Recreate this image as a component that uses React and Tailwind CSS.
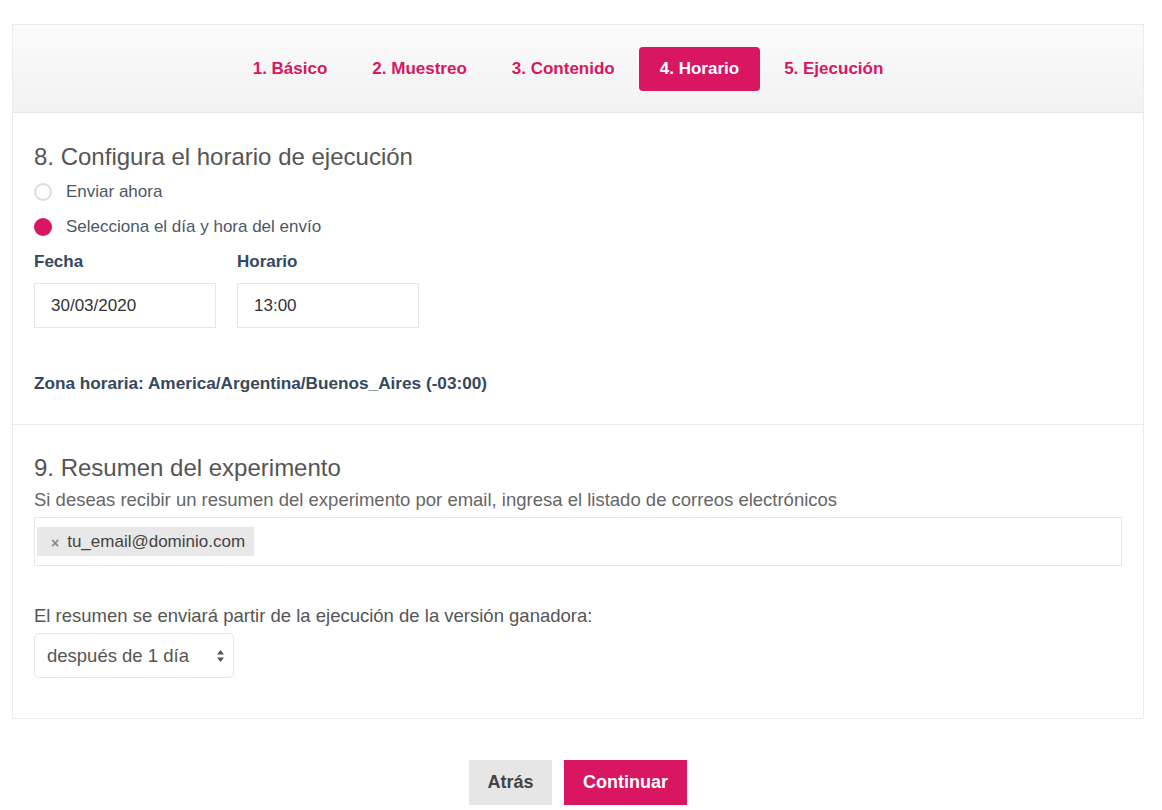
import React, { useState } from 'react'

const tabs = ['1. Básico', '2. Muestreo', '3. Contenido', '4. Horario', '5. Ejecución']

function Radio({ checked, label }) {
  return (
    <label className="flex items-center h-[35px]">
      {checked ? (
        <span className="w-[18px] h-[18px] rounded-full bg-[#d81661]"></span>
      ) : (
        <span className="w-[18px] h-[18px] rounded-full border-2 border-[#dcdcdc] bg-white"></span>
      )}
      <span className="ml-[14px] text-[17px] text-[#4b5866]">{label}</span>
    </label>
  )
}

export default function App() {
  const [active] = useState(3)

  return (
    <div className="bg-white min-h-[810px] pt-6 px-3 font-['Liberation_Sans',Arial,sans-serif]">
      <div className="w-[1132px] border border-[#ececec]">
        {/* steps */}
        <div className="h-[88px] bg-gradient-to-b from-[#fbfbfb] to-[#f2f2f2] border-b border-[#e6e6e6] flex items-center justify-center pr-5">
          {tabs.map((t, i) => (
            <div
              key={t}
              className={
                i === active
                  ? 'mx-[1.5px] px-[21px] h-11 flex items-center rounded-[4px] bg-[#d81661] text-white text-[17px] font-bold'
                  : 'mx-[1.5px] px-[21px] h-11 flex items-center text-[#d81661] text-[17px] font-bold'
              }
            >
              {t}
            </div>
          ))}
        </div>

        {/* section 8 */}
        <div className="px-[21px] pt-[30px] pb-[30px] border-b border-[#ececec]">
          <h2 className="text-[24px] leading-[28px] text-[#555]">8. Configura el horario de ejecución</h2>
          <div className="mt-[3px]">
            <Radio label="Enviar ahora" />
            <Radio checked label="Selecciona el día y hora del envío" />
          </div>
          <div className="flex gap-[21px] mt-[7px]">
            <div>
              <div className="text-[17px] leading-[22px] font-bold text-[#34495e]">Fecha</div>
              <div className="mt-[10px] w-[182px] h-[45px] border border-[#e6e6e6] flex items-center px-4 text-[17px] text-[#333]">30/03/2020</div>
            </div>
            <div>
              <div className="text-[17px] leading-[22px] font-bold text-[#34495e]">Horario</div>
              <div className="mt-[10px] w-[182px] h-[45px] border border-[#e6e6e6] flex items-center px-4 text-[17px] text-[#333]">13:00</div>
            </div>
          </div>
          <div className="mt-[44px] text-[17.2px] leading-[22px] font-bold text-[#34495e]">Zona horaria: America/Argentina/Buenos_Aires (-03:00)</div>
        </div>

        {/* section 9 */}
        <div className="px-[21px] pt-[29px] pb-10">
          <h2 className="text-[24px] leading-[28px] text-[#555]">9. Resumen del experimento</h2>
          <p className="mt-[6px] text-[18.5px] leading-6 text-[#666]">Si deseas recibir un resumen del experimento por email, ingresa el listado de correos electrónicos</p>
          <div className="mt-[5px] h-[49px] border border-[#e6e6e6] flex items-center px-[2px]">
            <span className="h-[29px] bg-[#e8e8e8] flex items-center pl-[14px] pr-[9px] text-[17px] text-[#444]">
              <span className="text-[#888] text-[14px] font-bold mr-[8px] mt-[3px]">×</span>
              tu_email@dominio.com
            </span>
          </div>
          <p className="mt-[38px] text-[18.5px] leading-6 text-[#555]">El resumen se enviará partir de la ejecución de la versión ganadora:</p>
          <div className="mt-[5px] w-[200px] h-[45px] border border-[#e6e6e6] rounded-[5px] flex items-center justify-between pl-3 pr-[8px] text-[18.5px] text-[#555]">
            <span>después de 1 día</span>
            <svg width="9" height="14" viewBox="0 0 9 14">
              <path d="M4.5 1 L8 5.5 H1 Z" fill="#555" />
              <path d="M4.5 13 L8 8.5 H1 Z" fill="#555" />
            </svg>
          </div>
        </div>
      </div>

      <div className="flex justify-center gap-3 mt-[41px] pr-[6px]">
        <button className="w-[83px] h-[45px] bg-[#e6e6e6] text-[#444] text-[18px] font-bold">Atrás</button>
        <button className="w-[123px] h-[45px] bg-[#d81661] text-white text-[18px] font-bold">Continuar</button>
      </div>
    </div>
  )
}
